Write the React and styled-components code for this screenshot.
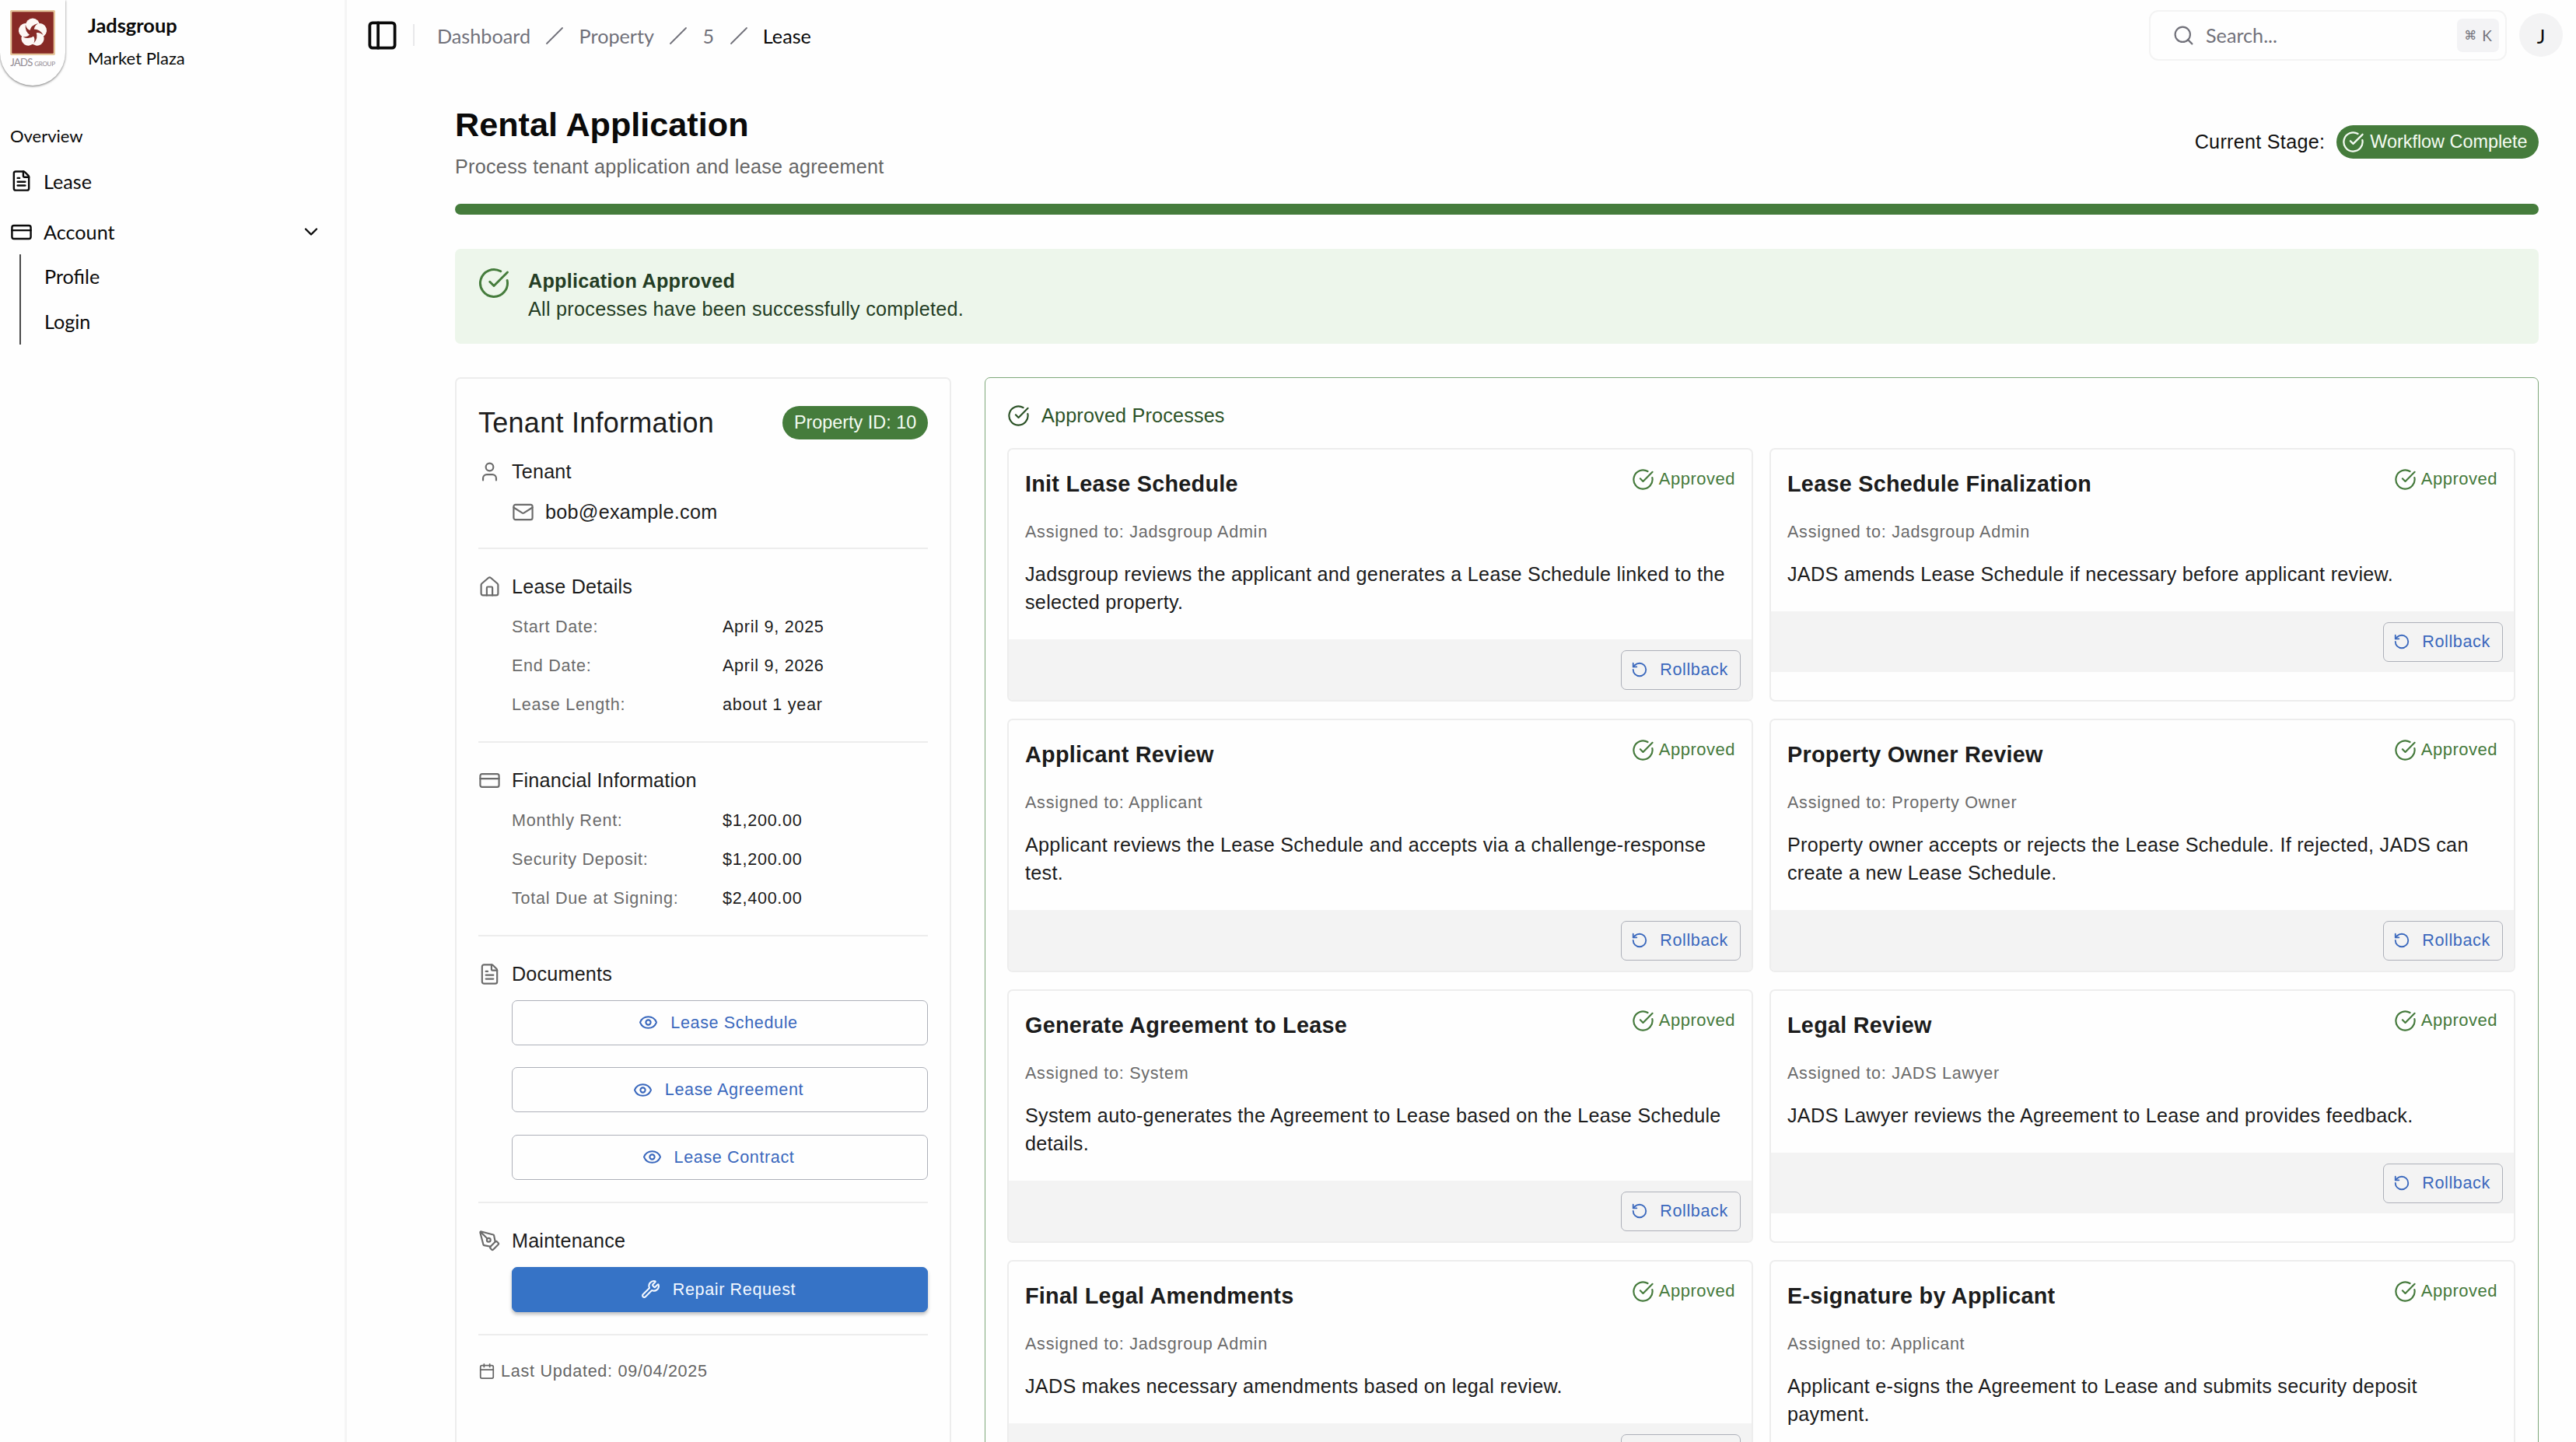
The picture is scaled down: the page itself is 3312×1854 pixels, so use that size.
import React from "react";
import styled, { createGlobalStyle, css } from "styled-components";
import {
  FileText, CreditCard, ChevronDown, PanelLeft, Search, CircleCheckBig, User, Mail,
  House, Eye, PenTool, Wrench, Calendar, RotateCcw, Slash,
} from "lucide-react";

const green = "#457c3c";
const line = "#ededed";

const GlobalStyle = createGlobalStyle`
  *, *::before, *::after { box-sizing: border-box; }
  html, body { margin: 0; height: 100%; }
  body {
    background: #fefefe;
    color: #1c1c1c;
    font-family: "Liberation Sans", Arial, sans-serif;
    font-size: 25.2px;
    overflow: hidden;
  }
  h1, h2, h3, p { margin: 0; font-weight: 400; }
  svg { display: block; flex: none; }
`;

const Shell = styled.div`
  display: flex;
  width: 3312px;
  height: 1854px;
  overflow: hidden;
`;

/* ---------- sidebar ---------- */

const Sidebar = styled.aside`
  width: 446px;
  flex: none;
  border-right: 3px solid #f5f5f5;
  font-family: Lato, sans-serif;
  color: #0a0a0a;
`;

const Brand = styled.div`
  display: flex;
  height: 158px;
`;

const LogoBadge = styled.div`
  display: flex;
  flex-direction: column;
  align-items: center;
  width: 84px;
  height: 110px;
  padding-top: 13px;
  border-radius: 0 0 42px 42px;
  box-shadow: 0 1px 3px rgba(0, 0, 0, 0.55);
`;

const LogoName = styled.span`
  margin-top: 1px;
  font: 400 13px/16px "Lato", sans-serif;
  letter-spacing: -0.7px;
  color: #8f8890;
  white-space: nowrap;
  small { font-size: 8px; letter-spacing: -0.3px; }
`;

const BrandText = styled.div`
  padding: 14px 0 0 29px;
`;

const BrandName = styled.div`
  font-size: 25.4px;
  font-weight: 700;
  line-height: 36px;
`;

const BrandSub = styled.div`
  margin-top: 9px;
  font-size: 22px;
  line-height: 32px;
`;

const NavHeading = styled.div`
  padding-left: 13px;
  font-size: 22px;
  line-height: 34px;
`;

const NavItem = styled.div`
  display: flex;
  align-items: center;
  height: 57.6px;
  margin-top: ${(p) => p.$top || 0}px;
  padding: 0 29px 0 13px;
  gap: 14px;
  font-size: 25.2px;
  span { flex: 1; }
`;

const SubNav = styled.div`
  display: flex;
  flex-direction: column;
  height: 116px;
  margin-left: 25px;
  border-left: 2px solid #4a4a4a;
`;

const SubItem = styled.div`
  height: 58px;
  padding-left: 30px;
  font-size: 25.2px;
  line-height: 57px;
`;

/* ---------- top bar ---------- */

const Main = styled.main`
  flex: 1;
  min-width: 0;
`;

const TopBar = styled.header`
  display: flex;
  align-items: center;
  height: 90px;
  padding: 0 17px 0 24px;
  font-family: Lato, sans-serif;
  font-size: 25.2px;
`;

const Divider = styled.i`
  width: 2px;
  height: 28px;
  margin: 0 29px 0 18px;
  background: #e8e8ea;
`;

const Crumbs = styled.nav`
  display: flex;
  align-items: center;
  flex: 1;
  gap: 19.3px;
  line-height: 36px;
  padding-top: 2px;
  color: #71717a;
`;

const Crumb = styled.span`
  color: ${(p) => (p.$current ? "#0a0a0a" : "inherit")};
`;

const SearchBox = styled.div`
  display: flex;
  align-items: center;
  width: 460px;
  height: 65px;
  margin-right: 16px;
  padding: 0 8px 0 28px;
  border: 2px solid #f3f3f3;
  border-radius: 12px;
  color: #71717a;
`;

const SearchHint = styled.span`
  flex: 1;
  padding-left: 14px;
`;

const Kbd = styled.kbd`
  display: flex;
  align-items: center;
  justify-content: center;
  gap: 7px;
  width: 54px;
  height: 43px;
  border-radius: 7px;
  background: #f3f3f5;
  font: 19px Lato, "DejaVu Sans", sans-serif;
  b { font-weight: 400; font-size: 16px; }
`;

const Avatar = styled.div`
  width: 56px;
  height: 56px;
  border-radius: 50%;
  background: #f3f3f4;
  color: #0a0a0a;
  text-align: center;
  line-height: 58px;
`;

/* ---------- page ---------- */

const Page = styled.div`
  padding: 42px 48px 0 139px;
`;

const PageHead = styled.div`
  display: flex;
  justify-content: space-between;
  height: 130px;
`;

const Title = styled.h1`
  font-size: 43.2px;
  font-weight: 700;
  line-height: 57px;
  color: #0a0a0a;
`;

const Subtitle = styled.p`
  margin-top: 7px;
  line-height: 36px;
  letter-spacing: 0.27px;
  color: #666;
`;

const Stage = styled.div`
  display: flex;
  align-items: center;
  gap: 15px;
  height: 43px;
  margin-top: 29px;
  color: #111;
  letter-spacing: 0.27px;
`;

const Chip = styled.span`
  display: flex;
  align-items: center;
  gap: 7px;
  height: 43px;
  padding: 0 ${(p) => (p.$icon ? "14.4px 0 7px" : "14.8px")};
  border-radius: 22px;
  background: ${green};
  color: #f4fbf2;
  font-size: 23.4px;
  letter-spacing: 0;
  white-space: nowrap;
`;

const Progress = styled.div`
  height: 14px;
  border-radius: 7px;
  background: ${green};
`;

const Alert = styled.div`
  display: flex;
  gap: 23px;
  height: 122px;
  margin-top: 44px;
  padding: 23px 29px;
  border-radius: 7px;
  background: #edf6eb;
  color: #243d24;
`;

const AlertText = styled.div`
  line-height: 36px;
  letter-spacing: 0.27px;
`;

const Columns = styled.div`
  display: grid;
  grid-template-columns: 638px 1998px;
  justify-content: space-between;
  margin-top: 43px;
`;

const Panel = styled.section`
  height: 1500px;
  padding: 35px 28px;
  border: 2px solid ${line};
  border-radius: 7px;
`;

const ApprovedPanel = styled(Panel)`
  padding: 28px 29px 28px 28px;
  border: 1px solid #7fa87a;
`;

/* ---------- tenant panel ---------- */

const TenantHead = styled.div`
  display: flex;
  align-items: center;
  justify-content: space-between;
  height: 43px;
`;

const TenantTitle = styled.h2`
  font-size: 36px;
  letter-spacing: 0.27px;
`;

const Block = styled.div`
  height: ${(p) => p.$h}px;
  padding-top: ${(p) => p.$pt || 30}px;
  border-bottom: 2px solid ${line};
`;

const BlockTitle = styled.h3`
  display: flex;
  align-items: center;
  gap: 14px;
  height: 36px;
  margin-bottom: ${(p) => (p.$spaced ? 15.5 : 0)}px;
  font-size: 25.2px;
  letter-spacing: 0.18px;
  svg { color: #6b6b6b; }
`;

const Email = styled.div`
  display: flex;
  align-items: center;
  gap: 14px;
  height: 36px;
  margin-top: 16px;
  padding-left: 43px;
  letter-spacing: 0.27px;
  svg { color: #6b6b6b; }
`;

const Facts = styled.dl`
  display: grid;
  grid-template-columns: 271px 1fr;
  grid-auto-rows: 50.2px;
  margin: 9px 0 0 43px;
  font-size: 21.6px;
  line-height: 50px;
  letter-spacing: 0.72px;
  dt { color: #6b6b6b; }
  dd { margin: 0; }
`;

const buttonBase = css`
  display: flex;
  align-items: center;
  justify-content: center;
  border: 1px solid #adb0b9;
  border-radius: 7px;
  color: #3a68bd;
  font-size: 21.6px;
  letter-spacing: 0.6px;
`;

const WideButton = styled.div`
  ${buttonBase}
  gap: 16px;
  height: 58px;
  margin: 0 0 ${(p) => (p.$solid ? 0 : 28.6)}px 43px;
  padding-right: 4px;
  ${(p) => p.$solid && css`
    border-color: #3673c6;
    background: #3673c6;
    color: #f3f8ff;
    box-shadow: 0 3px 4px rgba(0, 0, 0, 0.25);
  `}
`;

const Updated = styled.div`
  display: flex;
  align-items: center;
  gap: 7px;
  height: 36px;
  margin-top: 28px;
  font-size: 21.6px;
  letter-spacing: 0.72px;
  color: #666;
`;

/* ---------- process panel ---------- */

const PanelTitle = styled.h2`
  display: flex;
  align-items: center;
  gap: 15px;
  height: 36px;
  margin: 2px 0 24px;
  color: #2c5227;
  font-size: 25.2px;
  letter-spacing: 0.18px;
`;

const CardGrid = styled.div`
  display: grid;
  grid-template-columns: 1fr 1fr;
  grid-auto-rows: 326px;
  gap: 22px 21px;
`;

const Card = styled.article`
  border: 2px solid ${line};
  border-radius: 7px;
  overflow: hidden;
`;

const CardBody = styled.div`
  padding: 21px 21px 30px;
`;

const CardHead = styled.div`
  display: flex;
  justify-content: space-between;
  height: 67px;
`;

const CardTitle = styled.h3`
  font-size: 28.8px;
  font-weight: 700;
  line-height: 46px;
  letter-spacing: 0.26px;
`;

const Approved = styled.span`
  display: flex;
  align-items: center;
  gap: 6px;
  height: 34px;
  color: #457a3c;
  font-size: 22px;
  letter-spacing: 0.5px;
`;

const Assigned = styled.p`
  font-size: 21.6px;
  line-height: 36px;
  letter-spacing: 0.72px;
  color: #6b6b6b;
`;

const Description = styled.p`
  margin-top: 18px;
  line-height: 36px;
  letter-spacing: 0.27px;
`;

const CardFoot = styled.div`
  display: flex;
  justify-content: flex-end;
  align-items: center;
  height: 78px;
  padding-right: 14px;
  background: #f3f3f3;
`;

const Rollback = styled.div`
  ${buttonBase}
  gap: 15px;
  width: 154px;
  height: 51px;
  padding-right: 3px;
`;

const processes = [
  ["Init Lease Schedule", "Jadsgroup Admin", "Jadsgroup reviews the applicant and generates a Lease Schedule linked to the selected property."],
  ["Lease Schedule Finalization", "Jadsgroup Admin", "JADS amends Lease Schedule if necessary before applicant review."],
  ["Applicant Review", "Applicant", "Applicant reviews the Lease Schedule and accepts via a challenge-response test."],
  ["Property Owner Review", "Property Owner", "Property owner accepts or rejects the Lease Schedule. If rejected, JADS can create a new Lease Schedule."],
  ["Generate Agreement to Lease", "System", "System auto-generates the Agreement to Lease based on the Lease Schedule details."],
  ["Legal Review", "JADS Lawyer", "JADS Lawyer reviews the Agreement to Lease and provides feedback."],
  ["Final Legal Amendments", "Jadsgroup Admin", "JADS makes necessary amendments based on legal review."],
  ["E-signature by Applicant", "Applicant", "Applicant e-signs the Agreement to Lease and submits security deposit payment."],
];

const petals = [0, 72, 144, 216, 288];

function Logo() {
  return (
    <svg width="58" height="58" viewBox="0 0 58 58">
      <rect x="1" y="1" width="56" height="56" rx="2" fill="#872a26" stroke="#e6c79c" strokeWidth="2.5" />
      <g transform="translate(29 29)">
        {petals.map((a) => (
          <circle key={a} cx="0" cy="-9.5" r="9" fill="#fdf8f5" transform={`rotate(${a})`} />
        ))}
        {petals.map((a) => (
          <path key={a} d="M-4 -2 Q-2 -10 7 -12 Q1 -8 2 -3 Z" fill="#872a26" transform={`rotate(${a})`} />
        ))}
        <circle r="4.2" fill="#872a26" />
      </g>
    </svg>
  );
}

function FactList({ rows }) {
  return (
    <Facts>
      {rows.map(([k, v]) => (
        <React.Fragment key={k}>
          <dt>{k}</dt>
          <dd>{v}</dd>
        </React.Fragment>
      ))}
    </Facts>
  );
}

function ProcessCard({ title, owner, text }) {
  return (
    <Card>
      <CardBody>
        <CardHead>
          <CardTitle>{title}</CardTitle>
          <Approved><CircleCheckBig size={29} strokeWidth={1.8} />Approved</Approved>
        </CardHead>
        <Assigned>Assigned to: {owner}</Assigned>
        <Description>{text}</Description>
      </CardBody>
      <CardFoot>
        <Rollback><RotateCcw size={22} strokeWidth={2} />Rollback</Rollback>
      </CardFoot>
    </Card>
  );
}

export default function App() {
  return (
    <Shell>
      <GlobalStyle />
      <Sidebar>
        <Brand>
          <LogoBadge>
            <Logo />
            <LogoName>JADS <small>GROUP</small></LogoName>
          </LogoBadge>
          <BrandText>
            <BrandName>Jadsgroup</BrandName>
            <BrandSub>Market Plaza</BrandSub>
          </BrandText>
        </Brand>
        <NavHeading>Overview</NavHeading>
        <NavItem $top={12}><FileText size={29} /><span>Lease</span></NavItem>
        <NavItem $top={8}><CreditCard size={29} /><span>Account</span><ChevronDown size={28} /></NavItem>
        <SubNav>
          <SubItem>Profile</SubItem>
          <SubItem>Login</SubItem>
        </SubNav>
      </Sidebar>
      <Main>
        <TopBar>
          <PanelLeft size={43} strokeWidth={2.1} color="#0a0a0a" />
          <Divider />
          <Crumbs>
            <Crumb>Dashboard</Crumb>
            <Slash size={24} strokeWidth={1.8} />
            <Crumb>Property</Crumb>
            <Slash size={24} strokeWidth={1.8} />
            <Crumb>5</Crumb>
            <Slash size={24} strokeWidth={1.8} />
            <Crumb $current>Lease</Crumb>
          </Crumbs>
          <SearchBox>
            <Search size={29} strokeWidth={1.8} />
            <SearchHint>Search...</SearchHint>
            <Kbd><b>⌘</b>K</Kbd>
          </SearchBox>
          <Avatar>J</Avatar>
        </TopBar>
        <Page>
          <PageHead>
            <div>
              <Title>Rental Application</Title>
              <Subtitle>Process tenant application and lease agreement</Subtitle>
            </div>
            <Stage>
              Current Stage:
              <Chip $icon><CircleCheckBig size={29} strokeWidth={1.9} />Workflow Complete</Chip>
            </Stage>
          </PageHead>
          <Progress />
          <Alert>
            <CircleCheckBig size={42} strokeWidth={1.7} color={green} />
            <AlertText>
              <strong>Application Approved</strong>
              <p>All processes have been successfully completed.</p>
            </AlertText>
          </Alert>
          <Columns>
            <Panel>
              <TenantHead>
                <TenantTitle>Tenant Information</TenantTitle>
                <Chip>Property ID: 10</Chip>
              </TenantHead>
              <Block $h={141} $pt={23}>
                <BlockTitle><User size={29} strokeWidth={1.8} />Tenant</BlockTitle>
                <Email><Mail size={29} strokeWidth={1.8} />bob@example.com</Email>
              </Block>
              <Block $h={249}>
                <BlockTitle><House size={29} strokeWidth={1.8} />Lease Details</BlockTitle>
                <FactList rows={[["Start Date:", "April 9, 2025"], ["End Date:", "April 9, 2026"], ["Lease Length:", "about 1 year"]]} />
              </Block>
              <Block $h={249}>
                <BlockTitle><CreditCard size={29} strokeWidth={1.8} />Financial Information</BlockTitle>
                <FactList rows={[["Monthly Rent:", "$1,200.00"], ["Security Deposit:", "$1,200.00"], ["Total Due at Signing:", "$2,400.00"]]} />
              </Block>
              <Block $h={343}>
                <BlockTitle $spaced><FileText size={29} strokeWidth={1.8} />Documents</BlockTitle>
                {["Lease Schedule", "Lease Agreement", "Lease Contract"].map((d) => (
                  <WideButton key={d}><Eye size={25} strokeWidth={2} />{d}</WideButton>
                ))}
              </Block>
              <Block $h={170}>
                <BlockTitle $spaced><PenTool size={29} strokeWidth={1.8} />Maintenance</BlockTitle>
                <WideButton $solid><Wrench size={25} strokeWidth={2} />Repair Request</WideButton>
              </Block>
              <Updated><Calendar size={22} strokeWidth={1.9} />Last Updated: 09/04/2025</Updated>
            </Panel>
            <ApprovedPanel>
              <PanelTitle><CircleCheckBig size={29} strokeWidth={1.8} />Approved Processes</PanelTitle>
              <CardGrid>
                {processes.map(([title, owner, text]) => (
                  <ProcessCard key={title} title={title} owner={owner} text={text} />
                ))}
              </CardGrid>
            </ApprovedPanel>
          </Columns>
        </Page>
      </Main>
    </Shell>
  );
}
